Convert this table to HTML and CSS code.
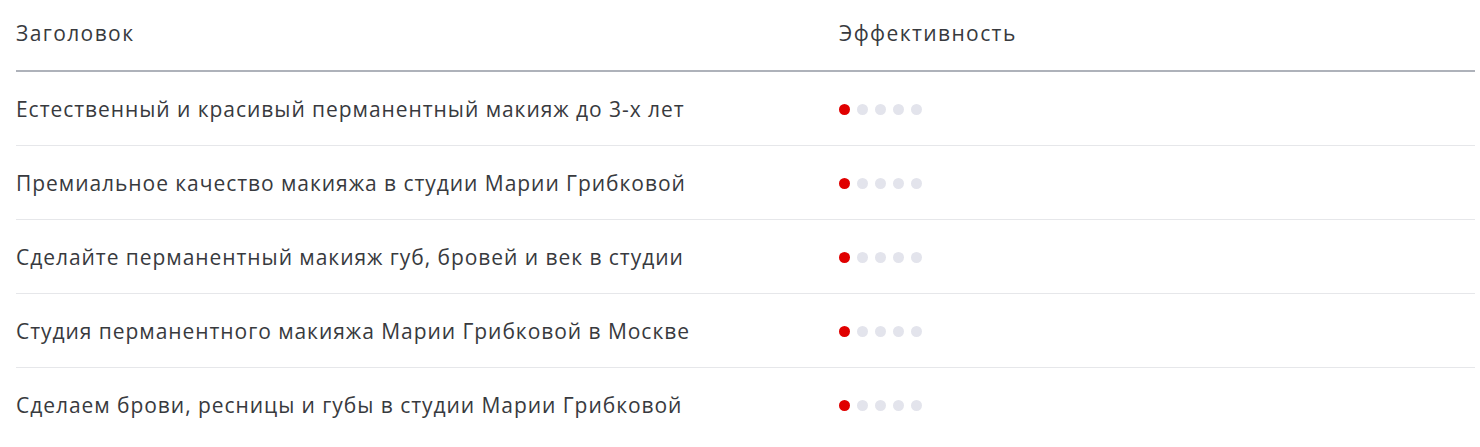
FILE: index.html
```html
<!DOCTYPE html>
<html lang="ru">
<head>
<meta charset="utf-8">
<link rel="stylesheet" href="styles.css">
</head>
<body>
<div class="table">
  <div class="row head">
    <div class="cell title">Заголовок</div>
    <div class="cell eff">Эффективность</div>
  </div>
  <div class="row">
    <div class="cell title">Естественный и красивый перманентный макияж до 3-х лет</div>
    <div class="cell eff"><span class="dots"><i class="on"></i><i></i><i></i><i></i><i></i></span></div>
  </div>
  <div class="row">
    <div class="cell title">Премиальное качество макияжа в студии Марии Грибковой</div>
    <div class="cell eff"><span class="dots"><i class="on"></i><i></i><i></i><i></i><i></i></span></div>
  </div>
  <div class="row">
    <div class="cell title">Сделайте перманентный макияж губ, бровей и век в студии</div>
    <div class="cell eff"><span class="dots"><i class="on"></i><i></i><i></i><i></i><i></i></span></div>
  </div>
  <div class="row">
    <div class="cell title">Студия перманентного макияжа Марии Грибковой в Москве</div>
    <div class="cell eff"><span class="dots"><i class="on"></i><i></i><i></i><i></i><i></i></span></div>
  </div>
  <div class="row last">
    <div class="cell title">Сделаем брови, ресницы и губы в студии Марии Грибковой</div>
    <div class="cell eff"><span class="dots"><i class="on"></i><i></i><i></i><i></i><i></i></span></div>
  </div>
</div>
</body>
</html>
```
FILE: styles.css
```css
html, body {
  margin: 0;
  padding: 0;
  background: #ffffff;
}
body {
  font-family: "Open Sans", "Noto Sans", sans-serif;
  font-size: 21px;
  letter-spacing: 0.95px;
  color: #383a3e;
}
.table {
  margin: 0 5px 0 16px;
}
.row {
  display: grid;
  grid-template-columns: 823px 1fr;
  height: 73px;
  align-items: center;
  border-bottom: 1px solid #e6e7ea;
}
.row.head {
  border-bottom: 2px solid #aeb2ba;
  padding-bottom: 4px;
  box-sizing: border-box;
  height: 72px;
  letter-spacing: 1.4px;
}
.row.last {
  border-bottom: none;
}
.cell {
  white-space: nowrap;
}
.dots {
  display: flex;
  gap: 7px;
  align-items: center;
  padding-top: 2px;
}
.dots i {
  display: block;
  width: 11px;
  height: 11px;
  border-radius: 50%;
  background: #e3e4ec;
}
.dots i.on {
  background: #e00000;
}
```
